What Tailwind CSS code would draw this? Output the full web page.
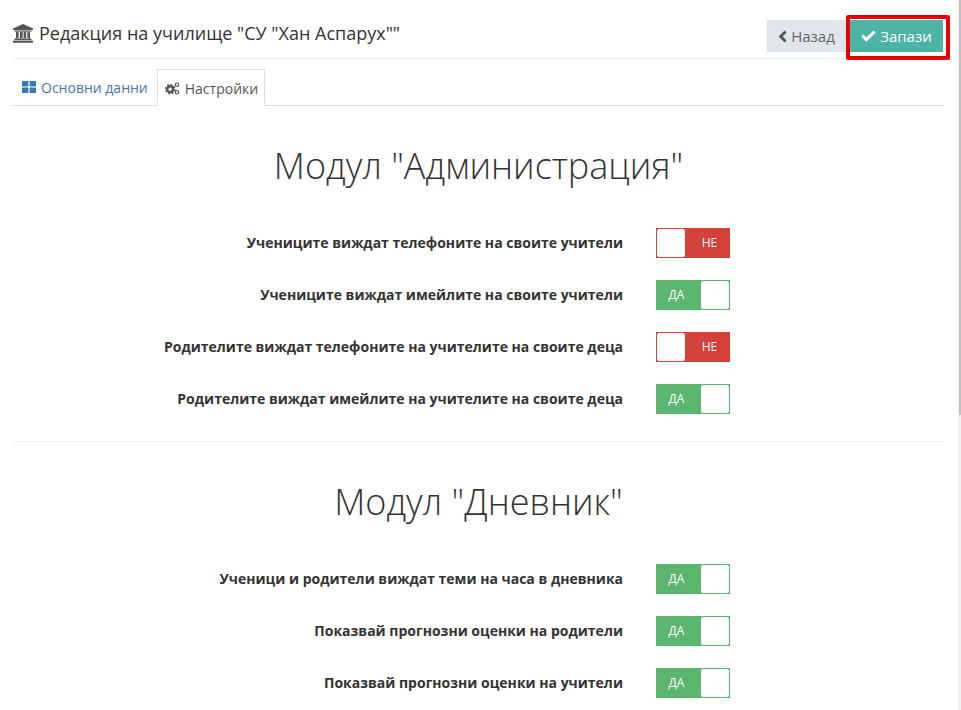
<!doctype html>
<html>
<head>
  <meta charset="UTF-8">
  <meta name="viewport" content="width=device-width, initial-scale=1.0">
  <script src="https://cdn.jsdelivr.net/npm/@tailwindcss/browser@4"></script>
</head>
<body class="bg-white h-[710px] overflow-hidden font-['Open_Sans',sans-serif] text-[#333333]">
  <div class="relative h-[710px] pl-[13px] pr-[17px]">
    <!-- scrollbar -->
    <div class="absolute right-0 top-0 w-[3px] h-[710px] bg-[#f1f1f1]">
      <div class="ml-[1px] w-[2px] h-[415px] bg-[#c1c1c1]"></div>
    </div>

    <header class="flex justify-between h-[59px] border-b border-[#eeeeee]">
      <h1 class="flex items-center h-[20px] mt-[23px] text-[18px] leading-[20px] text-[#333333]">
        <svg class="w-[20px] h-[19px] mr-[6px]" viewBox="0 0 20 19" fill="#555555">
          <path d="M10 0 L20 4.5 V6 H0 V4.5 Z"/>
          <rect x="1.5" y="6.5" width="17" height="1.2"/>
          <rect x="3" y="8" width="2.6" height="6"/>
          <rect x="7" y="8" width="2.6" height="6"/>
          <rect x="10.6" y="8" width="2.6" height="6"/>
          <rect x="14.4" y="8" width="2.6" height="6"/>
          <rect x="1.5" y="14.4" width="17" height="1.6"/>
          <rect x="0" y="16.6" width="20" height="2.2"/>
        </svg>
        Редакция на училище "СУ "Хан Аспарух""
      </h1>
      <div class="flex items-start gap-[4px] mt-[20px] mr-[1px]">
        <a class="flex items-center justify-center w-[79px] h-[32px] bg-[#e1e5ec] text-[#666666] text-[15px]">
          <svg class="w-[9px] h-[13px] mr-[4px]" viewBox="0 0 9 13" fill="#555555"><path d="M6.6 0.6 L8.6 2.6 L4.7 6.5 L8.6 10.4 L6.6 12.4 L0.7 6.5 Z"/></svg>
          Назад
        </a>
        <a class="relative flex items-center justify-center w-[93px] h-[32px] bg-[#4db3a4] text-white text-[15px]">
          <svg class="w-[15px] h-[12px] mr-[4px]" viewBox="0 0 15 12" fill="#ffffff"><path d="M5.4 11.8 L0.3 6.7 L2.4 4.6 L5.4 7.6 L12.5 0.4 L14.7 2.5 Z"/></svg>
          Запази
          <!-- red highlight drawn over the screenshot -->
          <span class="absolute -left-[4px] -top-[5px] w-[104px] h-[45px] border-[4px] border-[#e60000] rounded-[2px]"></span>
        </a>
      </div>
    </header>

    <nav class="flex h-[47px] pt-[10px] border-b border-[#dddddd] text-[14px]">
      <a class="flex items-center h-[36px] pl-[9px] pr-[9px] text-[#4a76a8]">
        <svg class="w-[14px] h-[12px] mr-[5px]" viewBox="0 0 14 12" fill="#337ab7">
          <rect width="6.4" height="5.4" rx="0.6"/><rect x="7.6" width="6.4" height="5.4" rx="0.6"/>
          <rect y="6.6" width="6.4" height="5.4" rx="0.6"/><rect x="7.6" y="6.6" width="6.4" height="5.4" rx="0.6"/>
        </svg>
        Основни данни
      </a>
      <a class="flex items-center h-[37px] w-[108px] pl-[7px] bg-white border border-b-0 border-[#dddddd] text-[#555555]">
        <svg class="w-[15px] h-[13px] mr-[5px]" viewBox="0 0 15 13" fill="none" stroke="#555555">
          <circle cx="5.2" cy="7.2" r="2.9" stroke-width="2.4"/>
          <circle cx="5.2" cy="7.2" r="4.5" stroke-width="1.6" stroke-dasharray="1.9 1.6"/>
          <circle cx="12" cy="2.7" r="1.7" stroke-width="1.2"/>
          <circle cx="12" cy="10.3" r="1.7" stroke-width="1.2"/>
        </svg>
        Настройки
      </a>
    </nav>

    <section class="border-b border-[#eeeeee] h-[336px]">
      <h2 class="pt-[36px] h-[122px] text-center text-[36px] leading-[48px] font-light text-[#333333]">Модул "Администрация"</h2>
      <div class="flex flex-col gap-[22px]">
        <div class="flex items-center justify-end h-[30px] w-[717px]"><label class="pb-[2px] text-[14px] font-bold mr-[33px]">Учениците виждат телефоните на своите учители</label><div class="flex w-[74px] h-[30px] bg-[#d2423b] border border-[#d2423b]"><span class="w-[28px] h-[28px] bg-white rounded-[2px]"></span><span class="flex-1 pl-[5px] text-center text-white text-[12px] leading-[28px]">НЕ</span></div></div>
        <div class="flex items-center justify-end h-[30px] w-[717px]"><label class="pb-[2px] text-[14px] font-bold mr-[33px]">Учениците виждат имейлите на своите учители</label><div class="flex w-[74px] h-[30px] bg-[#5cb66f] border border-[#5cb66f]"><span class="flex-1 pr-[5px] text-center text-white text-[12px] leading-[28px]">ДА</span><span class="w-[28px] h-[28px] bg-white rounded-[2px]"></span></div></div>
        <div class="flex items-center justify-end h-[30px] w-[717px]"><label class="pb-[2px] text-[14px] font-bold mr-[33px]">Родителите виждат телефоните на учителите на своите деца</label><div class="flex w-[74px] h-[30px] bg-[#d2423b] border border-[#d2423b]"><span class="w-[28px] h-[28px] bg-white rounded-[2px]"></span><span class="flex-1 pl-[5px] text-center text-white text-[12px] leading-[28px]">НЕ</span></div></div>
        <div class="flex items-center justify-end h-[30px] w-[717px]"><label class="pb-[2px] text-[14px] font-bold mr-[33px]">Родителите виждат имейлите на учителите на своите деца</label><div class="flex w-[74px] h-[30px] bg-[#5cb66f] border border-[#5cb66f]"><span class="flex-1 pr-[5px] text-center text-white text-[12px] leading-[28px]">ДА</span><span class="w-[28px] h-[28px] bg-white rounded-[2px]"></span></div></div>
      </div>
    </section>

    <section>
      <h2 class="pt-[36px] h-[122px] text-center text-[36px] leading-[48px] font-light text-[#333333]">Модул "Дневник"</h2>
      <div class="flex flex-col gap-[22px]">
        <div class="flex items-center justify-end h-[30px] w-[717px]"><label class="pb-[2px] text-[14px] font-bold mr-[33px]">Ученици и родители виждат теми на часа в дневника</label><div class="flex w-[74px] h-[30px] bg-[#5cb66f] border border-[#5cb66f]"><span class="flex-1 pr-[5px] text-center text-white text-[12px] leading-[28px]">ДА</span><span class="w-[28px] h-[28px] bg-white rounded-[2px]"></span></div></div>
        <div class="flex items-center justify-end h-[30px] w-[717px]"><label class="pb-[2px] text-[14px] font-bold mr-[33px]">Показвай прогнозни оценки на родители</label><div class="flex w-[74px] h-[30px] bg-[#5cb66f] border border-[#5cb66f]"><span class="flex-1 pr-[5px] text-center text-white text-[12px] leading-[28px]">ДА</span><span class="w-[28px] h-[28px] bg-white rounded-[2px]"></span></div></div>
        <div class="flex items-center justify-end h-[30px] w-[717px]"><label class="pb-[2px] text-[14px] font-bold mr-[33px]">Показвай прогнозни оценки на учители</label><div class="flex w-[74px] h-[30px] bg-[#5cb66f] border border-[#5cb66f]"><span class="flex-1 pr-[5px] text-center text-white text-[12px] leading-[28px]">ДА</span><span class="w-[28px] h-[28px] bg-white rounded-[2px]"></span></div></div>
      </div>
    </section>
  </div>
</body>
</html>
